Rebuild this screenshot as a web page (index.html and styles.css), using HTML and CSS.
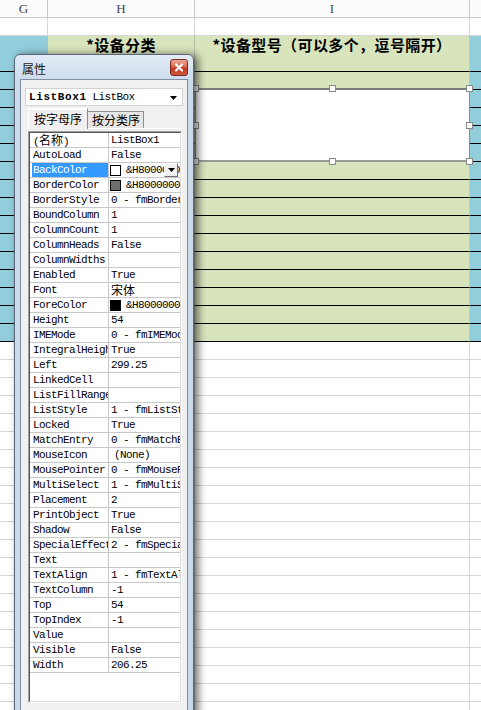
FILE: index.html
```html
<!DOCTYPE html>
<html lang="zh-CN">
<head>
<meta charset="utf-8">
<title>属性</title>
<link rel="stylesheet" href="styles.css">
</head>
<body>
<div class="sheet">
  <div class="row colhead"><div class="c g">G</div><div class="c h">H</div><div class="c i">I</div><div class="c j"></div></div>
  <div class="row plain"><div class="c g"></div><div class="c h"></div><div class="c i"></div><div class="c j"></div></div>
  <div class="row band"><div class="c g"></div><div class="c h title">*设备分类</div><div class="c i title">*设备型号（可以多个，逗号隔开）</div><div class="c j"></div></div>
  <div class="row band"><div class="c g"></div><div class="c h"></div><div class="c i"></div><div class="c j"></div></div>
  <div class="row band"><div class="c g"></div><div class="c h"></div><div class="c i"></div><div class="c j"></div></div>
  <div class="row band"><div class="c g"></div><div class="c h"></div><div class="c i"></div><div class="c j"></div></div>
  <div class="row band"><div class="c g"></div><div class="c h"></div><div class="c i"></div><div class="c j"></div></div>
  <div class="row band"><div class="c g"></div><div class="c h"></div><div class="c i"></div><div class="c j"></div></div>
  <div class="row band"><div class="c g"></div><div class="c h"></div><div class="c i"></div><div class="c j"></div></div>
  <div class="row band"><div class="c g"></div><div class="c h"></div><div class="c i"></div><div class="c j"></div></div>
  <div class="row band"><div class="c g"></div><div class="c h"></div><div class="c i"></div><div class="c j"></div></div>
  <div class="row band"><div class="c g"></div><div class="c h"></div><div class="c i"></div><div class="c j"></div></div>
  <div class="row band"><div class="c g"></div><div class="c h"></div><div class="c i"></div><div class="c j"></div></div>
  <div class="row band"><div class="c g"></div><div class="c h"></div><div class="c i"></div><div class="c j"></div></div>
  <div class="row band"><div class="c g"></div><div class="c h"></div><div class="c i"></div><div class="c j"></div></div>
  <div class="row band"><div class="c g"></div><div class="c h"></div><div class="c i"></div><div class="c j"></div></div>
  <div class="row band"><div class="c g"></div><div class="c h"></div><div class="c i"></div><div class="c j"></div></div>
  <div class="row band"><div class="c g"></div><div class="c h"></div><div class="c i"></div><div class="c j"></div></div>
  <div class="row band"><div class="c g"></div><div class="c h"></div><div class="c i"></div><div class="c j"></div></div>
  <div class="row plain"><div class="c g"></div><div class="c h"></div><div class="c i"></div><div class="c j"></div></div>
  <div class="row plain"><div class="c g"></div><div class="c h"></div><div class="c i"></div><div class="c j"></div></div>
  <div class="row plain"><div class="c g"></div><div class="c h"></div><div class="c i"></div><div class="c j"></div></div>
  <div class="row plain"><div class="c g"></div><div class="c h"></div><div class="c i"></div><div class="c j"></div></div>
  <div class="row plain"><div class="c g"></div><div class="c h"></div><div class="c i"></div><div class="c j"></div></div>
  <div class="row plain"><div class="c g"></div><div class="c h"></div><div class="c i"></div><div class="c j"></div></div>
  <div class="row plain"><div class="c g"></div><div class="c h"></div><div class="c i"></div><div class="c j"></div></div>
  <div class="row plain"><div class="c g"></div><div class="c h"></div><div class="c i"></div><div class="c j"></div></div>
  <div class="row plain"><div class="c g"></div><div class="c h"></div><div class="c i"></div><div class="c j"></div></div>
  <div class="row plain"><div class="c g"></div><div class="c h"></div><div class="c i"></div><div class="c j"></div></div>
  <div class="row plain"><div class="c g"></div><div class="c h"></div><div class="c i"></div><div class="c j"></div></div>
  <div class="row plain"><div class="c g"></div><div class="c h"></div><div class="c i"></div><div class="c j"></div></div>
  <div class="row plain"><div class="c g"></div><div class="c h"></div><div class="c i"></div><div class="c j"></div></div>
  <div class="row plain"><div class="c g"></div><div class="c h"></div><div class="c i"></div><div class="c j"></div></div>
  <div class="row plain"><div class="c g"></div><div class="c h"></div><div class="c i"></div><div class="c j"></div></div>
  <div class="row plain"><div class="c g"></div><div class="c h"></div><div class="c i"></div><div class="c j"></div></div>
  <div class="row plain"><div class="c g"></div><div class="c h"></div><div class="c i"></div><div class="c j"></div></div>
  <div class="row plain"><div class="c g"></div><div class="c h"></div><div class="c i"></div><div class="c j"></div></div>
  <div class="row plain"><div class="c g"></div><div class="c h"></div><div class="c i"></div><div class="c j"></div></div>
  <div class="row plain"><div class="c g"></div><div class="c h"></div><div class="c i"></div><div class="c j"></div></div>
  <div class="row plain"><div class="c g"></div><div class="c h"></div><div class="c i"></div><div class="c j"></div></div>

  <div class="listbox">
    <span class="hd h-tl"></span><span class="hd h-tc"></span><span class="hd h-tr"></span>
    <span class="hd h-ml"></span><span class="hd h-mr"></span>
    <span class="hd h-bl"></span><span class="hd h-bc"></span><span class="hd h-br"></span>
  </div>
</div>

<div class="props">
  <div class="tbar">
    <span class="ttl">属性</span>
    <span class="close"><svg width="10" height="9" viewBox="0 0 10 9"><path d="M2 1.5 L8 7.5 M8 1.5 L2 7.5" stroke="#fff" stroke-width="2.2" stroke-linecap="round"/></svg></span>
  </div>
  <div class="client">
    <div class="dd"><b class="ddb">ListBox1</b><span class="ddn"> ListBox</span><svg class="ddarrow" width="7" height="4" viewBox="0 0 7 4"><path d="M0 0 H7 L3.5 4 Z" fill="#000"/></svg></div>
    <div class="tabs"><span class="tab on">按字母序</span><span class="tab">按分类序</span></div>
    <div class="panel">
      <div class="grid">
        <div class="gridin">
          <div class="prow"><span class="pn">(<span class="cjk">名称</span>)</span><span class="pv">ListBox1</span></div>
          <div class="prow"><span class="pn">AutoLoad</span><span class="pv">False</span></div>
          <div class="prow sel"><span class="pn">BackColor</span><span class="pv"><i class="sw sw-w"></i>&amp;H80000005&amp;<span class="btn"><svg width="7" height="4" viewBox="0 0 7 4"><path d="M0 0 H7 L3.5 4 Z" fill="#000"/></svg></span></span></div>
          <div class="prow"><span class="pn">BorderColor</span><span class="pv"><i class="sw sw-g"></i>&amp;H80000006&amp;</span></div>
          <div class="prow"><span class="pn">BorderStyle</span><span class="pv">0 - fmBorderStyleNone</span></div>
          <div class="prow"><span class="pn">BoundColumn</span><span class="pv">1</span></div>
          <div class="prow"><span class="pn">ColumnCount</span><span class="pv">1</span></div>
          <div class="prow"><span class="pn">ColumnHeads</span><span class="pv">False</span></div>
          <div class="prow"><span class="pn">ColumnWidths</span><span class="pv"></span></div>
          <div class="prow"><span class="pn">Enabled</span><span class="pv">True</span></div>
          <div class="prow"><span class="pn">Font</span><span class="pv"><span class="cjk">宋体</span></span></div>
          <div class="prow"><span class="pn">ForeColor</span><span class="pv"><i class="sw sw-b"></i>&amp;H80000008&amp;</span></div>
          <div class="prow"><span class="pn">Height</span><span class="pv">54</span></div>
          <div class="prow"><span class="pn">IMEMode</span><span class="pv">0 - fmIMEModeNoControl</span></div>
          <div class="prow"><span class="pn">IntegralHeight</span><span class="pv">True</span></div>
          <div class="prow"><span class="pn">Left</span><span class="pv">299.25</span></div>
          <div class="prow"><span class="pn">LinkedCell</span><span class="pv"></span></div>
          <div class="prow"><span class="pn">ListFillRange</span><span class="pv"></span></div>
          <div class="prow"><span class="pn">ListStyle</span><span class="pv">1 - fmListStyleOption</span></div>
          <div class="prow"><span class="pn">Locked</span><span class="pv">True</span></div>
          <div class="prow"><span class="pn">MatchEntry</span><span class="pv">0 - fmMatchEntryNone</span></div>
          <div class="prow"><span class="pn">MouseIcon</span><span class="pv"><span class="none">(None)</span></span></div>
          <div class="prow"><span class="pn">MousePointer</span><span class="pv">0 - fmMousePointerDefault</span></div>
          <div class="prow"><span class="pn">MultiSelect</span><span class="pv">1 - fmMultiSelectMulti</span></div>
          <div class="prow"><span class="pn">Placement</span><span class="pv">2</span></div>
          <div class="prow"><span class="pn">PrintObject</span><span class="pv">True</span></div>
          <div class="prow"><span class="pn">Shadow</span><span class="pv">False</span></div>
          <div class="prow"><span class="pn">SpecialEffect</span><span class="pv">2 - fmSpecialEffectSunken</span></div>
          <div class="prow"><span class="pn">Text</span><span class="pv"></span></div>
          <div class="prow"><span class="pn">TextAlign</span><span class="pv">1 - fmTextAlignLeft</span></div>
          <div class="prow"><span class="pn">TextColumn</span><span class="pv">-1</span></div>
          <div class="prow"><span class="pn">Top</span><span class="pv">54</span></div>
          <div class="prow"><span class="pn">TopIndex</span><span class="pv">-1</span></div>
          <div class="prow"><span class="pn">Value</span><span class="pv"></span></div>
          <div class="prow"><span class="pn">Visible</span><span class="pv">False</span></div>
          <div class="prow"><span class="pn">Width</span><span class="pv">206.25</span></div>
        </div>
      </div>
    </div>
  </div>
</div>
</body>
</html>
```

FILE: styles.css
```css
* { box-sizing: border-box; }
html, body { margin: 0; padding: 0; }
body {
  width: 481px;
  height: 710px;
  overflow: hidden;
  position: relative;
  background: #fff;
  font-family: "Liberation Sans", sans-serif;
}

/* ---------- spreadsheet ---------- */
.sheet { position: relative; width: 481px; }
.row {
  display: grid;
  grid-template-columns: 48px 147px 275px 11px;
  height: 18px;
}
.c {
  border-right: 1px solid #d6d6d6;
  border-bottom: 1px solid #d6d6d6;
}
.c.j { border-right: none; }
.colhead .c {
  background: #fbfbfb;
  border-color: #c8c8c8;
  font: 13px/17px "Liberation Serif", serif;
  color: #444;
  text-align: center;
}
.band .c { border-bottom: 1px solid #000; }
.band .g, .band .j { background: #92cddc; }
.band .h, .band .i { background: #d8e4bc; }
.band .g { border-right-color: #92cddc; }
.band .h { border-right-color: #b8bfa8; }
.band .i { border-right-color: #c4c4c4; }
.title {
  font: 700 15px/18px "Noto Sans CJK SC", sans-serif;
  letter-spacing: 0.4px;
  text-align: center;
  color: #000;
  white-space: nowrap;
  padding-top: 0;
}

/* ActiveX listbox on the sheet */
.listbox {
  position: absolute;
  left: 195px;
  top: 88px;
  width: 275px;
  height: 74px;
  background: #fff;
  border: 1px solid #8c8c8c;
  border-top: 2px solid #7c7c7c;
  border-bottom: 2px solid #9a9a9a;
}
.hd {
  position: absolute;
  width: 7px;
  height: 7px;
  background: #fff;
  border: 1px solid #8a8a8a;
}
.h-tl { left: -4px; top: -5px; }
.h-tc { left: 133px; top: -5px; }
.h-tr { right: -4px; top: -5px; }
.h-ml { left: -4px; top: 32px; }
.h-mr { right: -4px; top: 32px; }
.h-bl { left: -4px; bottom: -5px; }
.h-bc { left: 133px; bottom: -5px; }
.h-br { right: -4px; bottom: -5px; }

/* ---------- properties window ---------- */
.props {
  position: absolute;
  left: 14px;
  top: 54px;
  width: 180px;
  height: 680px;
  border: 1px solid #5a6778;
  border-radius: 6px 6px 0 0;
  background: linear-gradient(#e2ebf6, #cddbec 26px, #c8d7ea);
  box-shadow: 4px 1px 8px rgba(0, 0, 0, 0.6);
  padding: 0 5px;
  display: flex;
  flex-direction: column;
}
.tbar {
  height: 24px;
  flex: none;
  display: flex;
  justify-content: space-between;
  align-items: flex-start;
}
.ttl {
  font: 12px/14px "Noto Sans CJK SC", sans-serif;
  color: #1a1a1a;
  margin: 7px 0 0 2px;
}
.close {
  width: 18px;
  height: 17px;
  margin-top: 4px;
  border: 1px solid #7a2a1c;
  border-radius: 3px;
  background: linear-gradient(#eba897, #d8634a 48%, #c2391f 52%, #d0573c);
  display: flex;
  align-items: center;
  justify-content: center;
}
.client {
  flex: 1;
  background: #f0f0f0;
  border: 1px solid #7f90a6;
  padding: 8px 4px 0;
}
.dd {
  height: 18px;
  background: #fff;
  border: 1px solid #d2d2d2;
  display: flex;
  align-items: center;
  padding: 0 5px 0 3px;
  font-family: "Liberation Mono", monospace;
  white-space: pre;
}
.ddb { font-size: 11px; font-weight: 700; letter-spacing: 0.6px; }
.ddn { font-size: 11px; letter-spacing: -0.6px; }
.ddarrow { margin-left: auto; margin-top: 1px; }

.tabs {
  display: flex;
  align-items: flex-end;
  height: 20px;
  margin: 2px 0 0 3px;
}
.tab {
  font: 12px/15px "Noto Sans CJK SC", sans-serif;
  color: #000;
  height: 17px;
  width: 56px;
  padding-left: 4px;
  background: #e6e6e6;
  border: 1px solid #8e8e8e;
  border-bottom: none;
  border-left: none;
  white-space: nowrap;
}
.tab.on {
  position: relative;
  z-index: 1;
  width: 60px;
  height: 21px;
  margin-bottom: -1px;
  padding: 2px 0 0 5px;
  background: #f0f0f0;
  border-left: 1px solid #fff;
  border-top: 1px solid #fff;
  box-shadow: inset 0 1px #fff;
}
.panel {
  margin: 0 1px 0 3px;
  border-top: 1px solid #fff;
  padding-top: 2px;
}
.grid {
  height: 572px;
  border: 1px solid;
  border-color: #a0a0a0 #fff #fff #a0a0a0;
}
.gridin {
  height: 100%;
  background: #fff;
  border: 1px solid;
  border-color: #555 #dcdcdc #dcdcdc #555;
  overflow: hidden;
}
.prow {
  display: grid;
  grid-template-columns: 77px 1fr;
  height: 15px;
  padding-left: 2px;
  border-bottom: 1px solid #c8c8c8;
  font: 11px/14px "Liberation Mono", "Noto Sans CJK SC", monospace;
  letter-spacing: -0.6px;
  color: #000;
  white-space: pre;
}
.pn {
  padding-left: 1px;
  border-right: 1px solid #c8c8c8;
  overflow: hidden;
}
.pv {
  position: relative;
  padding-left: 2px;
  overflow: hidden;
  display: flex;
  align-items: center;
}
.cjk {
  font: 12px/14px "Noto Sans CJK SC", sans-serif;
  letter-spacing: 0;
}
.sel .pn { background: #3399ff; color: #fff; }
.sw {
  flex: none;
  width: 11px;
  height: 11px;
  border: 1px solid #000;
  margin: 0 5px 0 -1px;
}
.sw-w { background: #fff; }
.sw-g { background: #6e6e6e; }
.sw-b { background: #000; }
.none { margin-left: 3px; }
.btn {
  position: absolute;
  right: 2px;
  top: 0;
  width: 14px;
  height: 14px;
  background: #f0f0f0;
  border: 1px solid;
  border-color: #fff #707070 #707070 #fff;
  display: flex;
  align-items: center;
  justify-content: center;
}
```
